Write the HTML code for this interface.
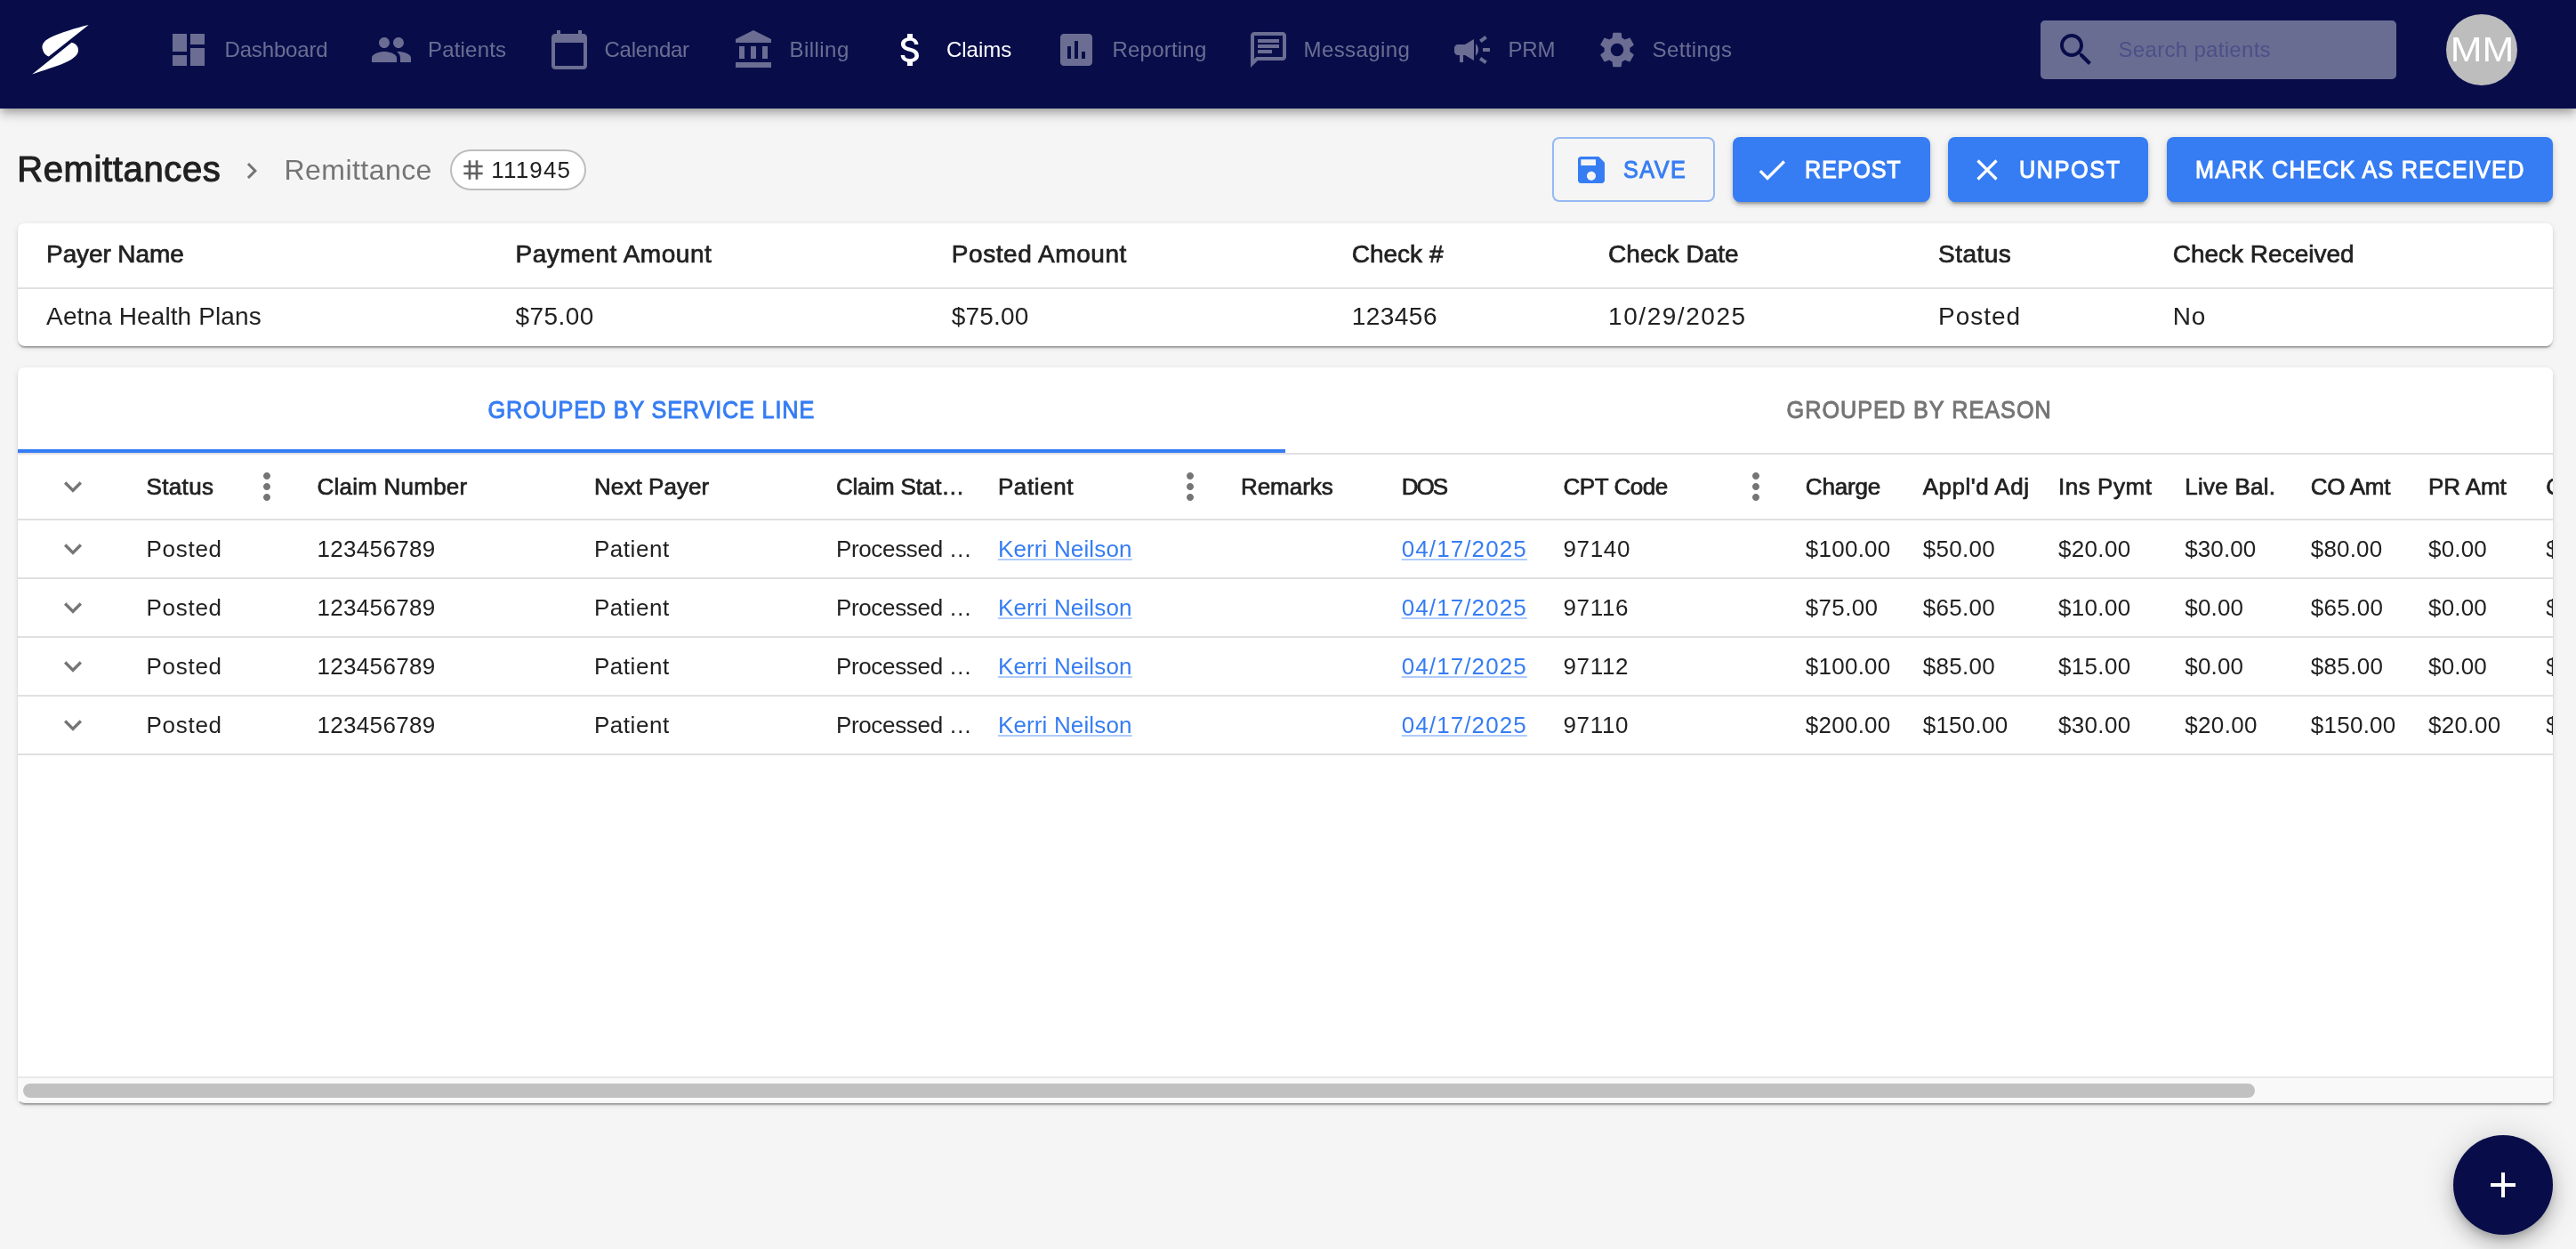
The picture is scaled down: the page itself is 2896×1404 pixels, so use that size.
<!DOCTYPE html>
<html><head><meta charset="utf-8"><style>
html,body{margin:0;padding:0;}
body{width:2896px;height:1404px;overflow:hidden;background:#f5f5f5;position:relative;font-family:"Liberation Sans", sans-serif;}
.t{position:absolute;white-space:nowrap;font-family:"Liberation Sans", sans-serif;}
.r{position:absolute;}
#w{position:absolute;left:0;top:0;width:2896px;height:1404px;will-change:transform;}
@media (max-width:2000px){body{zoom:0.5;}}
</style></head><body><div id="w">
<div class="r" style="left:0px;top:0px;width:2896px;height:122px;background:#080d4a;box-shadow:0 4px 8px -2px rgba(0,0,0,.2),0 8px 10px 0 rgba(0,0,0,.14),0 2px 20px 0 rgba(0,0,0,.12);z-index:2"></div>
<svg class="r" style="left:30px;top:20px;z-index:3" width="80" height="72" viewBox="0 0 80 72"><path fill="#fff" d="M69.7,8.1 C55,11.5 38,17 26,22.5 C19,26 16.5,31 17.8,35 C18.8,39.5 21.5,42.5 24.8,43.4 Z"/><path fill="#fff" d="M6.1,63.6 C20,58.6 33,55 43,50.5 C52,46.5 58,42 58,36.5 C58,32 55,29 50.6,27.8 Z"/></svg>
<svg class="r" style="left:188px;top:32px;z-index:3" width="48" height="48" viewBox="0 0 24 24"><path fill="#6b6e92" d="M3 13h8V3H3v10zm0 8h8v-6H3v6zm10 0h8V11h-8v10zm0-18v6h8V3h-8z"/></svg>
<div class="t" id="t0" style="left:252.5px;top:43.7px;font-size:24px;line-height:24px;color:#6b6e92;letter-spacing:-0.16px;z-index:3">Dashboard</div>
<svg class="r" style="left:415.5px;top:32px;z-index:3" width="48" height="48" viewBox="0 0 24 24"><path fill="#6b6e92" d="M16 11c1.66 0 2.99-1.34 2.99-3S17.66 5 16 5c-1.66 0-3 1.34-3 3s1.34 3 3 3zm-8 0c1.66 0 2.99-1.34 2.99-3S9.66 5 8 5C6.34 5 5 6.34 5 8s1.34 3 3 3zm0 2c-2.33 0-7 1.17-7 3.5V19h14v-2.5c0-2.330-4.67-3.5-7-3.5zm8 0c-.29 0-.62.02-.97.05 1.16.84 1.970 1.97 1.97 3.45V19h6v-2.5c0-2.33-4.67-3.5-7-3.5z"/></svg>
<div class="t" id="t1" style="left:481.0px;top:43.7px;font-size:24px;line-height:24px;color:#6b6e92;letter-spacing:0.19px;z-index:3">Patients</div>
<svg class="r" style="left:616px;top:32px;z-index:3" width="48" height="48" viewBox="0 0 24 24"><path fill="#6b6e92" d="M20 3h-1V1h-2v2H7V1H5v2H4c-1.1 0-2 .9-2 2v16c0 1.1.9 2 2 2h16c1.1 0 2-.9 2-2V5c0-1.1-.9-2-2-2zm0 18H4V8h16v13z"/></svg>
<div class="t" id="t2" style="left:679.5px;top:43.7px;font-size:24px;line-height:24px;color:#6b6e92;letter-spacing:-0.26px;z-index:3">Calendar</div>
<svg class="r" style="left:823px;top:32px;z-index:3" width="48" height="48" viewBox="0 0 24 24"><path fill="#6b6e92" d="M4 10h3v7H4zM10.5 10h3v7h-3zM2 19h20v3H2zM17 10h3v7h-3zM12 1 2 6v2h20V6z"/></svg>
<div class="t" id="t3" style="left:887.5px;top:43.7px;font-size:24px;line-height:24px;color:#6b6e92;letter-spacing:0.45px;z-index:3">Billing</div>
<svg class="r" style="left:999.5px;top:32px;z-index:3" width="48" height="48" viewBox="0 0 24 24"><path fill="#ffffff" d="M11.8 10.9c-2.27-.59-3-1.2-3-2.150 0-1.09 1.01-1.85 2.7-1.85 1.78 0 2.44.85 2.5 2.1h2.21c-.07-1.72-1.12-3.3-3.21-3.81V3h-3v2.16c-1.94.42-3.5 1.68-3.5 3.61 0 2.31 1.91 3.46 4.7 4.13 2.5.6 3 1.48 3 2.41 0 .69-.49 1.79-2.7 1.79-2.06 0-2.87-.92-2.98-2.1h-2.2c.12 2.19 1.76 3.42 3.68 3.83V21h3v-2.15c1.95-.37 3.5-1.5 3.5-3.55 0-2.84-2.43-3.81-4.7-4.4z"/></svg>
<div class="t" id="t4" style="left:1064.0px;top:43.7px;font-size:24px;line-height:24px;color:#ffffff;letter-spacing:-0.02px;z-index:3">Claims</div>
<svg class="r" style="left:1186px;top:32px;z-index:3" width="48" height="48" viewBox="0 0 24 24"><path fill="#6b6e92" d="M19 3H5c-1.1 0-2 .9-2 2v14c0 1.1.9 2 2 2h14c1.1 0 2-.9 2-2V5c0-1.1-.9-2-2-2zM9 17H7v-7h2v7zm4 0h-2V7h2v10zm4 0h-2v-4h2v4z"/></svg>
<div class="t" id="t5" style="left:1250.5px;top:43.7px;font-size:24px;line-height:24px;color:#6b6e92;letter-spacing:0.21px;z-index:3">Reporting</div>
<svg class="r" style="left:1402px;top:32px;z-index:3" width="48" height="48" viewBox="0 0 24 24"><path fill="#6b6e92" d="M20 2H4c-1.1 0-1.99.9-1.99 2L2 22l4-4h14c1.1 0 2-.9 2-2V4c0-1.1-.9-2-2-2zm0 14H5.17L4 17.17V4h16v12zM6 12h8v2H6zm0-3h12v2H6zm0-3h12v2H6z"/></svg>
<div class="t" id="t6" style="left:1465.5px;top:43.7px;font-size:24px;line-height:24px;color:#6b6e92;letter-spacing:0.40px;z-index:3">Messaging</div>
<svg class="r" style="left:1631px;top:32px;z-index:3" width="48" height="48" viewBox="0 0 24 24"><path fill="#6b6e92" d="M18 11v2h4v-2h-4zm-2 6.61c.96.71 2.21 1.65 3.2 2.39.4-.53.8-1.07 1.2-1.6-.99-.74-2.24-1.68-3.2-2.4-.4.54-.8 1.08-1.2 1.61zM20.4 5.6c-.4-.53-.8-1.07-1.2-1.6-.99.74-2.24 1.68-3.2 2.4.4.53.8 1.07 1.2 1.6.96-.72 2.21-1.65 3.2-2.4zM4 9c-1.1 0-2 .9-2 2v2c0 1.1.9 2 2 2h1v4h2v-4h1l5 3V6L8 9H4zm11.5 3c0-1.33-.58-2.53-1.5-3.35v6.69c.92-.81 1.5-2.01 1.5-3.34z"/></svg>
<div class="t" id="t7" style="left:1695.5px;top:43.7px;font-size:24px;line-height:24px;color:#6b6e92;letter-spacing:-0.18px;z-index:3">PRM</div>
<svg class="r" style="left:1794px;top:32px;z-index:3" width="48" height="48" viewBox="0 0 24 24"><path fill="#6b6e92" d="M19.14 12.94c.04-.3.06-.61.06-.94 0-.32-.02-.64-.07-.94l2.03-1.58c.18-.14.23-.41.12-.61l-1.92-3.32c-.12-.22-.37-.29-.59-.22l-2.39.96c-.5-.38-1.03-.7-1.62-.94l-.36-2.54c-.04-.24-.24-.41-.48-.41h-3.84c-.24 0-.43.17-.47.41l-.36 2.54c-.59.24-1.13.57-1.62.94l-2.39-.96c-.22-.08-.47 0-.59.22L2.740 8.87c-.12.21-.08.47.12.61l2.03 1.58c-.05.3-.09.63-.09.94s.02.64.07.94l-2.03 1.58c-.18.14-.23.41-.12.61l1.92 3.32c.12.22.37.29.59.22l2.39-.96c.5.38 1.03.7 1.62.94l.36 2.54c.05.24.24.41.48.41h3.84c.24 0 .44-.17.47-.41l.36-2.54c.59-.24 1.13-.56 1.62-.94l2.39.96c.22.08.47 0 .59-.22l1.92-3.32c.12-.22.07-.47-.12-.61l-2.01-1.58zM12 15.6c-1.98 0-3.6-1.62-3.6-3.6s1.62-3.6 3.6-3.6 3.6 1.62 3.6 3.6-1.62 3.6-3.6 3.6z"/></svg>
<div class="t" id="t8" style="left:1857.5px;top:43.7px;font-size:24px;line-height:24px;color:#6b6e92;letter-spacing:0.39px;z-index:3">Settings</div>
<div class="r" style="left:2294px;top:23px;width:400px;height:66px;background:rgba(255,255,255,.4);border-radius:5px;z-index:3"></div>
<svg class="r" style="left:2310px;top:32px;z-index:3" width="48" height="48" viewBox="0 0 24 24"><path fill="#080d4a" d="M15.5 14h-.79l-.28-.27C15.41 12.59 16 11.11 16 9.5 16 5.91 13.09 3 9.5 3S3 5.91 3 9.5 5.91 16 9.5 16c1.61 0 3.09-.59 4.23-1.57l.27.28v.79l5 4.99L20.49 19l-4.99-5zm-6 0C7.01 14 5 11.99 5 9.5S7.01 5 9.5 5 14 7.01 14 9.5 11.99 14 9.5 14z"/></svg>
<div class="t" id="t9" style="left:2381.5px;top:43.7px;font-size:24px;line-height:24px;color:#4a5087;letter-spacing:0.31px;z-index:3">Search patients</div>
<div class="r" style="left:2750px;top:16px;width:80px;height:80px;background:#bdbdbd;border-radius:50%;z-index:3"></div>
<div class="t" id="t10" style="left:2750.0px;top:36.0px;font-size:39px;line-height:39px;color:#fff;width:80px;text-align:center;z-index:3"><span style="display:inline-block;transform:scaleX(1.1);transform-origin:50% 0">MM</span></div>
<div class="t" id="t11" style="left:19.2px;top:170.1px;font-size:40px;line-height:40px;color:#212121;letter-spacing:0.63px;-webkit-text-stroke:1.1px currentColor;">Remittances</div>
<svg class="r" style="left:264.8px;top:174px;" width="36" height="36" viewBox="0 0 24 24"><path fill="#757575" d="M10 6 8.59 7.41 13.17 12l-4.58 4.59L10 18l6-6z"/></svg>
<div class="t" id="t12" style="left:319.5px;top:174.9px;font-size:32px;line-height:32px;color:#757575;letter-spacing:0.45px;">Remittance</div>
<div class="r" style="left:506px;top:168px;width:153px;height:46px;background:#fff;border:2px solid #bdbdbd;border-radius:23px;box-sizing:border-box"></div>
<svg class="r" style="left:515.7px;top:174.6px;" width="32" height="32" viewBox="0 0 24 24"><path fill="#616161" d="M20 10V8h-4V4h-2v4h-4V4H8v4H4v2h4v4H4v2h4v4h2v-4h4v4h2v-4h4v-2h-4v-4h4zm-6 4h-4v-4h4v4z"/></svg>
<div class="t" id="t13" style="left:552.3px;top:178.0px;font-size:26px;line-height:26px;color:#212121;letter-spacing:1.15px;">111945</div>
<div class="r" style="left:1745px;top:154px;width:183px;height:73px;border:2px solid rgba(54,125,244,.5);border-radius:8px;box-sizing:border-box"></div>
<svg class="r" style="left:1769px;top:171px;" width="40" height="40" viewBox="0 0 24 24"><path fill="#367df4" d="M17 3H5c-1.11 0-2 .9-2 2v14c0 1.1.89 2 2 2h14c1.1 0 2-.9 2-2V7l-4-4zm-5 16c-1.66 0-3-1.34-3-3s1.34-3 3-3 3 1.34 3 3-1.34 3-3 3zm3-10H5V5h10v4z"/></svg>
<div class="t" id="t14" style="left:1825.3px;top:177.1px;font-size:28px;line-height:28px;color:#367df4;letter-spacing:1.67px;-webkit-text-stroke:1.0px currentColor;"><span style="display:inline-block;transform:scaleX(0.9);transform-origin:0 0">SAVE</span></div>
<div class="r" style="left:1948px;top:154px;width:222px;height:73px;background:#367df4;border-radius:8px;box-shadow:0 6px 2px -4px rgba(0,0,0,.2),0 4px 4px 0 rgba(0,0,0,.14),0 2px 10px 0 rgba(0,0,0,.12)"></div>
<div class="r" style="left:2190px;top:154px;width:225px;height:73px;background:#367df4;border-radius:8px;box-shadow:0 6px 2px -4px rgba(0,0,0,.2),0 4px 4px 0 rgba(0,0,0,.14),0 2px 10px 0 rgba(0,0,0,.12)"></div>
<div class="r" style="left:2436px;top:154px;width:434px;height:73px;background:#367df4;border-radius:8px;box-shadow:0 6px 2px -4px rgba(0,0,0,.2),0 4px 4px 0 rgba(0,0,0,.14),0 2px 10px 0 rgba(0,0,0,.12)"></div>
<svg class="r" style="left:1972.3px;top:170.7px;" width="40" height="40" viewBox="0 0 24 24"><path fill="#fff" d="M9 16.17 4.83 12l-1.42 1.41L9 19 21 7l-1.41-1.41z"/></svg>
<div class="t" id="t15" style="left:2028.5px;top:177.1px;font-size:28px;line-height:28px;color:#fff;letter-spacing:0.90px;-webkit-text-stroke:1.0px currentColor;"><span style="display:inline-block;transform:scaleX(0.9);transform-origin:0 0">REPOST</span></div>
<svg class="r" style="left:2213.7px;top:171px;" width="40" height="40" viewBox="0 0 24 24"><path fill="#fff" d="M19 6.41 17.59 5 12 10.59 6.41 5 5 6.41 10.59 12 5 17.59 6.41 19 12 13.41 17.59 19 19 17.59 13.41 12z"/></svg>
<div class="t" id="t16" style="left:2269.5px;top:177.1px;font-size:28px;line-height:28px;color:#fff;letter-spacing:1.80px;-webkit-text-stroke:1.0px currentColor;"><span style="display:inline-block;transform:scaleX(0.9);transform-origin:0 0">UNPOST</span></div>
<div class="t" id="t17" style="left:2468.3px;top:177.1px;font-size:28px;line-height:28px;color:#fff;letter-spacing:1.39px;-webkit-text-stroke:1.0px currentColor;"><span style="display:inline-block;transform:scaleX(0.9);transform-origin:0 0">MARK CHECK AS RECEIVED</span></div>
<div class="r" style="left:20px;top:251px;width:2850px;height:138px;background:#fff;border-radius:8px;box-shadow:0 4px 2px -2px rgba(0,0,0,.2),0 2px 2px 0 rgba(0,0,0,.14),0 2px 6px 0 rgba(0,0,0,.12)"></div>
<div class="r" style="left:20px;top:323px;width:2850px;height:2px;background:#e0e0e0"></div>
<div class="t" id="t18" style="left:52.1px;top:272.3px;font-size:28px;line-height:28px;color:#212121;letter-spacing:-0.11px;-webkit-text-stroke:0.7px currentColor;">Payer Name</div>
<div class="t" id="t19" style="left:52.1px;top:342.0px;font-size:28px;line-height:28px;color:#212121;letter-spacing:0.11px;">Aetna Health Plans</div>
<div class="t" id="t20" style="left:579.5px;top:272.3px;font-size:28px;line-height:28px;color:#212121;letter-spacing:0.55px;-webkit-text-stroke:0.7px currentColor;">Payment Amount</div>
<div class="t" id="t21" style="left:579.5px;top:342.0px;font-size:28px;line-height:28px;color:#212121;letter-spacing:0.45px;">$75.00</div>
<div class="t" id="t22" style="left:1069.8px;top:272.3px;font-size:28px;line-height:28px;color:#212121;letter-spacing:0.55px;-webkit-text-stroke:0.7px currentColor;">Posted Amount</div>
<div class="t" id="t23" style="left:1069.8px;top:342.0px;font-size:28px;line-height:28px;color:#212121;letter-spacing:0.18px;">$75.00</div>
<div class="t" id="t24" style="left:1519.7px;top:272.3px;font-size:28px;line-height:28px;color:#212121;letter-spacing:0.01px;-webkit-text-stroke:0.7px currentColor;">Check #</div>
<div class="t" id="t25" style="left:1519.7px;top:342.0px;font-size:28px;line-height:28px;color:#212121;letter-spacing:0.47px;">123456</div>
<div class="t" id="t26" style="left:1808.1px;top:272.3px;font-size:28px;line-height:28px;color:#212121;letter-spacing:0.03px;-webkit-text-stroke:0.7px currentColor;">Check Date</div>
<div class="t" id="t27" style="left:1808.1px;top:342.0px;font-size:28px;line-height:28px;color:#212121;letter-spacing:1.54px;">10/29/2025</div>
<div class="t" id="t28" style="left:2179.0px;top:272.3px;font-size:28px;line-height:28px;color:#212121;letter-spacing:0.47px;-webkit-text-stroke:0.7px currentColor;">Status</div>
<div class="t" id="t29" style="left:2179.0px;top:342.0px;font-size:28px;line-height:28px;color:#212121;letter-spacing:0.97px;">Posted</div>
<div class="t" id="t30" style="left:2442.7px;top:272.3px;font-size:28px;line-height:28px;color:#212121;-webkit-text-stroke:0.7px currentColor;">Check Received</div>
<div class="t" id="t31" style="left:2442.7px;top:342.0px;font-size:28px;line-height:28px;color:#212121;letter-spacing:0.90px;">No</div>
<div class="r" style="left:20px;top:413px;width:2850px;height:827px;background:#f5f5f5;border-radius:8px;box-shadow:0 4px 2px -2px rgba(0,0,0,.2),0 2px 2px 0 rgba(0,0,0,.14),0 2px 6px 0 rgba(0,0,0,.12)"></div>
<div class="r" style="left:20px;top:413px;width:2850px;height:827px;overflow:hidden;border-radius:8px 8px 0 0"><div style="position:absolute;left:-20px;top:-413px;width:2896px;height:1404px">
<div class="r" style="left:20px;top:413px;width:2850px;height:797px;background:#fff"></div>
<div class="t" id="t32" style="left:20.0px;top:447.3px;font-size:28px;line-height:28px;color:#367df4;letter-spacing:0.96px;-webkit-text-stroke:1.0px currentColor;width:1425px;text-align:center;"><span style="display:inline-block;transform:scaleX(0.9);transform-origin:50% 0">GROUPED BY SERVICE LINE</span></div>
<div class="t" id="t33" style="left:1445.0px;top:447.3px;font-size:28px;line-height:28px;color:#757575;letter-spacing:1.12px;-webkit-text-stroke:1.0px currentColor;width:1425px;text-align:center;"><span style="display:inline-block;transform:scaleX(0.9);transform-origin:50% 0">GROUPED BY REASON</span></div>
<div class="r" style="left:20px;top:505px;width:1425px;height:4px;background:#367df4"></div>
<div class="r" style="left:20px;top:509px;width:2850px;height:2px;background:#e0e0e0"></div>
<div class="r" style="left:20px;top:583px;width:2850px;height:2px;background:#e0e0e0"></div>
<div class="r" style="left:20px;top:649px;width:2850px;height:2px;background:#e0e0e0"></div>
<div class="r" style="left:20px;top:715px;width:2850px;height:2px;background:#e0e0e0"></div>
<div class="r" style="left:20px;top:781px;width:2850px;height:2px;background:#e0e0e0"></div>
<div class="r" style="left:20px;top:847px;width:2850px;height:2px;background:#e0e0e0"></div>
<svg class="r" style="left:61.8px;top:527.4px;" width="40" height="40" viewBox="0 0 24 24"><path fill="#757575" d="M16.59 8.59 12 13.17 7.41 8.59 6 10l6 6 6-6z"/></svg>
<div class="t" id="t34" style="left:164.5px;top:534.0px;font-size:26px;line-height:26px;color:#212121;letter-spacing:0.36px;-webkit-text-stroke:0.7px currentColor;">Status</div>
<div class="t" id="t35" style="left:356.5px;top:534.0px;font-size:26px;line-height:26px;color:#212121;letter-spacing:0.23px;-webkit-text-stroke:0.7px currentColor;">Claim Number</div>
<div class="t" id="t36" style="left:668.0px;top:534.0px;font-size:26px;line-height:26px;color:#212121;letter-spacing:0.07px;-webkit-text-stroke:0.7px currentColor;">Next Payer</div>
<div class="t" id="t37" style="left:939.9px;top:534.0px;font-size:26px;line-height:26px;color:#212121;letter-spacing:-0.16px;-webkit-text-stroke:0.7px currentColor;">Claim Stat…</div>
<div class="t" id="t38" style="left:1121.9px;top:534.0px;font-size:26px;line-height:26px;color:#212121;letter-spacing:0.61px;-webkit-text-stroke:0.7px currentColor;">Patient</div>
<div class="t" id="t39" style="left:1394.9px;top:534.0px;font-size:26px;line-height:26px;color:#212121;letter-spacing:-0.03px;-webkit-text-stroke:0.7px currentColor;">Remarks</div>
<div class="t" id="t40" style="left:1575.7px;top:534.0px;font-size:26px;line-height:26px;color:#212121;letter-spacing:-2.02px;-webkit-text-stroke:0.7px currentColor;">DOS</div>
<div class="t" id="t41" style="left:1757.5px;top:534.0px;font-size:26px;line-height:26px;color:#212121;letter-spacing:-0.46px;-webkit-text-stroke:0.7px currentColor;">CPT Code</div>
<div class="t" id="t42" style="left:2029.8px;top:534.0px;font-size:26px;line-height:26px;color:#212121;letter-spacing:-0.16px;-webkit-text-stroke:0.7px currentColor;">Charge</div>
<div class="t" id="t43" style="left:2161.7px;top:534.0px;font-size:26px;line-height:26px;color:#212121;letter-spacing:0.49px;-webkit-text-stroke:0.7px currentColor;">Appl'd Adj</div>
<div class="t" id="t44" style="left:2314.0px;top:534.0px;font-size:26px;line-height:26px;color:#212121;letter-spacing:0.54px;-webkit-text-stroke:0.7px currentColor;">Ins Pymt</div>
<div class="t" id="t45" style="left:2456.3px;top:534.0px;font-size:26px;line-height:26px;color:#212121;letter-spacing:0.25px;-webkit-text-stroke:0.7px currentColor;">Live Bal.</div>
<div class="t" id="t46" style="left:2597.8px;top:534.0px;font-size:26px;line-height:26px;color:#212121;letter-spacing:-0.27px;-webkit-text-stroke:0.7px currentColor;">CO Amt</div>
<div class="t" id="t47" style="left:2730.0px;top:534.0px;font-size:26px;line-height:26px;color:#212121;letter-spacing:-0.07px;-webkit-text-stroke:0.7px currentColor;">PR Amt</div>
<div class="t" id="t48" style="left:2862.3px;top:534.0px;font-size:26px;line-height:26px;color:#212121;-webkit-text-stroke:0.7px currentColor;">Cap</div>
<svg class="r" style="left:276px;top:523px;" width="48" height="48" viewBox="0 0 24 24"><path fill="#757575" d="M12 8c1.1 0 2-.9 2-2s-.9-2-2-2-2 .9-2 2 .9 2 2 2zm0 2c-1.1 0-2 .9-2 2s.9 2 2 2 2-.9 2-2-.9-2-2-2zm0 6c-1.1 0-2 .9-2 2s.9 2 2 2 2-.9 2-2-.9-2-2-2z"/></svg>
<svg class="r" style="left:1314px;top:523px;" width="48" height="48" viewBox="0 0 24 24"><path fill="#757575" d="M12 8c1.1 0 2-.9 2-2s-.9-2-2-2-2 .9-2 2 .9 2 2 2zm0 2c-1.1 0-2 .9-2 2s.9 2 2 2 2-.9 2-2-.9-2-2-2zm0 6c-1.1 0-2 .9-2 2s.9 2 2 2 2-.9 2-2-.9-2-2-2z"/></svg>
<svg class="r" style="left:1950px;top:523px;" width="48" height="48" viewBox="0 0 24 24"><path fill="#757575" d="M12 8c1.1 0 2-.9 2-2s-.9-2-2-2-2 .9-2 2 .9 2 2 2zm0 2c-1.1 0-2 .9-2 2s.9 2 2 2 2-.9 2-2-.9-2-2-2zm0 6c-1.1 0-2 .9-2 2s.9 2 2 2 2-.9 2-2-.9-2-2-2z"/></svg>
<svg class="r" style="left:61.8px;top:597.3px;" width="40" height="40" viewBox="0 0 24 24"><path fill="#757575" d="M16.59 8.59 12 13.17 7.41 8.59 6 10l6 6 6-6z"/></svg>
<div class="t" id="t49" style="left:164.5px;top:603.7px;font-size:26px;line-height:26px;color:#212121;letter-spacing:0.72px;">Posted</div>
<div class="t" id="t50" style="left:356.5px;top:603.7px;font-size:26px;line-height:26px;color:#212121;letter-spacing:0.32px;">123456789</div>
<div class="t" id="t51" style="left:668.0px;top:603.7px;font-size:26px;line-height:26px;color:#212121;letter-spacing:0.53px;">Patient</div>
<div class="t" id="t52" style="left:939.9px;top:603.7px;font-size:26px;line-height:26px;color:#212121;letter-spacing:-0.33px;">Processed …</div>
<div class="t" id="t53" style="left:1121.9px;top:603.7px;font-size:26px;line-height:26px;color:#367df4;letter-spacing:0.15px;text-decoration:underline;text-decoration-color:rgba(54,125,244,.4);text-underline-offset:2px;text-decoration-thickness:2px;">Kerri Neilson</div>
<div class="t" id="t54" style="left:1575.7px;top:603.7px;font-size:26px;line-height:26px;color:#367df4;letter-spacing:1.10px;text-decoration:underline;text-decoration-color:rgba(54,125,244,.4);text-underline-offset:2px;text-decoration-thickness:2px;">04/17/2025</div>
<div class="t" id="t55" style="left:1757.5px;top:603.7px;font-size:26px;line-height:26px;color:#212121;letter-spacing:0.65px;">97140</div>
<div class="t" id="t56" style="left:2029.8px;top:603.7px;font-size:26px;line-height:26px;color:#212121;letter-spacing:0.25px;">$100.00</div>
<div class="t" id="t57" style="left:2161.7px;top:603.7px;font-size:26px;line-height:26px;color:#212121;letter-spacing:0.32px;">$50.00</div>
<div class="t" id="t58" style="left:2314.0px;top:603.7px;font-size:26px;line-height:26px;color:#212121;letter-spacing:0.32px;">$20.00</div>
<div class="t" id="t59" style="left:2456.3px;top:603.7px;font-size:26px;line-height:26px;color:#212121;letter-spacing:0.07px;">$30.00</div>
<div class="t" id="t60" style="left:2597.8px;top:603.7px;font-size:26px;line-height:26px;color:#212121;letter-spacing:0.18px;">$80.00</div>
<div class="t" id="t61" style="left:2730.0px;top:603.7px;font-size:26px;line-height:26px;color:#212121;letter-spacing:0.18px;">$0.00</div>
<div class="t" id="t62" style="left:2862.3px;top:603.7px;font-size:26px;line-height:26px;color:#212121;">$0</div>
<svg class="r" style="left:61.8px;top:663.3px;" width="40" height="40" viewBox="0 0 24 24"><path fill="#757575" d="M16.59 8.59 12 13.17 7.41 8.59 6 10l6 6 6-6z"/></svg>
<div class="t" id="t63" style="left:164.5px;top:669.7px;font-size:26px;line-height:26px;color:#212121;letter-spacing:0.72px;">Posted</div>
<div class="t" id="t64" style="left:356.5px;top:669.7px;font-size:26px;line-height:26px;color:#212121;letter-spacing:0.32px;">123456789</div>
<div class="t" id="t65" style="left:668.0px;top:669.7px;font-size:26px;line-height:26px;color:#212121;letter-spacing:0.53px;">Patient</div>
<div class="t" id="t66" style="left:939.9px;top:669.7px;font-size:26px;line-height:26px;color:#212121;letter-spacing:-0.33px;">Processed …</div>
<div class="t" id="t67" style="left:1121.9px;top:669.7px;font-size:26px;line-height:26px;color:#367df4;letter-spacing:0.15px;text-decoration:underline;text-decoration-color:rgba(54,125,244,.4);text-underline-offset:2px;text-decoration-thickness:2px;">Kerri Neilson</div>
<div class="t" id="t68" style="left:1575.7px;top:669.7px;font-size:26px;line-height:26px;color:#367df4;letter-spacing:1.10px;text-decoration:underline;text-decoration-color:rgba(54,125,244,.4);text-underline-offset:2px;text-decoration-thickness:2px;">04/17/2025</div>
<div class="t" id="t69" style="left:1757.5px;top:669.7px;font-size:26px;line-height:26px;color:#212121;letter-spacing:0.65px;">97116</div>
<div class="t" id="t70" style="left:2029.8px;top:669.7px;font-size:26px;line-height:26px;color:#212121;letter-spacing:0.32px;">$75.00</div>
<div class="t" id="t71" style="left:2161.7px;top:669.7px;font-size:26px;line-height:26px;color:#212121;letter-spacing:0.32px;">$65.00</div>
<div class="t" id="t72" style="left:2314.0px;top:669.7px;font-size:26px;line-height:26px;color:#212121;letter-spacing:0.32px;">$10.00</div>
<div class="t" id="t73" style="left:2456.3px;top:669.7px;font-size:26px;line-height:26px;color:#212121;letter-spacing:0.18px;">$0.00</div>
<div class="t" id="t74" style="left:2597.8px;top:669.7px;font-size:26px;line-height:26px;color:#212121;letter-spacing:0.32px;">$65.00</div>
<div class="t" id="t75" style="left:2730.0px;top:669.7px;font-size:26px;line-height:26px;color:#212121;letter-spacing:0.18px;">$0.00</div>
<div class="t" id="t76" style="left:2862.3px;top:669.7px;font-size:26px;line-height:26px;color:#212121;">$0</div>
<svg class="r" style="left:61.8px;top:729.3px;" width="40" height="40" viewBox="0 0 24 24"><path fill="#757575" d="M16.59 8.59 12 13.17 7.41 8.59 6 10l6 6 6-6z"/></svg>
<div class="t" id="t77" style="left:164.5px;top:735.7px;font-size:26px;line-height:26px;color:#212121;letter-spacing:0.72px;">Posted</div>
<div class="t" id="t78" style="left:356.5px;top:735.7px;font-size:26px;line-height:26px;color:#212121;letter-spacing:0.32px;">123456789</div>
<div class="t" id="t79" style="left:668.0px;top:735.7px;font-size:26px;line-height:26px;color:#212121;letter-spacing:0.53px;">Patient</div>
<div class="t" id="t80" style="left:939.9px;top:735.7px;font-size:26px;line-height:26px;color:#212121;letter-spacing:-0.33px;">Processed …</div>
<div class="t" id="t81" style="left:1121.9px;top:735.7px;font-size:26px;line-height:26px;color:#367df4;letter-spacing:0.15px;text-decoration:underline;text-decoration-color:rgba(54,125,244,.4);text-underline-offset:2px;text-decoration-thickness:2px;">Kerri Neilson</div>
<div class="t" id="t82" style="left:1575.7px;top:735.7px;font-size:26px;line-height:26px;color:#367df4;letter-spacing:1.10px;text-decoration:underline;text-decoration-color:rgba(54,125,244,.4);text-underline-offset:2px;text-decoration-thickness:2px;">04/17/2025</div>
<div class="t" id="t83" style="left:1757.5px;top:735.7px;font-size:26px;line-height:26px;color:#212121;letter-spacing:0.65px;">97112</div>
<div class="t" id="t84" style="left:2029.8px;top:735.7px;font-size:26px;line-height:26px;color:#212121;letter-spacing:0.25px;">$100.00</div>
<div class="t" id="t85" style="left:2161.7px;top:735.7px;font-size:26px;line-height:26px;color:#212121;letter-spacing:0.32px;">$85.00</div>
<div class="t" id="t86" style="left:2314.0px;top:735.7px;font-size:26px;line-height:26px;color:#212121;letter-spacing:0.32px;">$15.00</div>
<div class="t" id="t87" style="left:2456.3px;top:735.7px;font-size:26px;line-height:26px;color:#212121;letter-spacing:0.18px;">$0.00</div>
<div class="t" id="t88" style="left:2597.8px;top:735.7px;font-size:26px;line-height:26px;color:#212121;letter-spacing:0.32px;">$85.00</div>
<div class="t" id="t89" style="left:2730.0px;top:735.7px;font-size:26px;line-height:26px;color:#212121;letter-spacing:0.18px;">$0.00</div>
<div class="t" id="t90" style="left:2862.3px;top:735.7px;font-size:26px;line-height:26px;color:#212121;">$0</div>
<svg class="r" style="left:61.8px;top:795.3px;" width="40" height="40" viewBox="0 0 24 24"><path fill="#757575" d="M16.59 8.59 12 13.17 7.41 8.59 6 10l6 6 6-6z"/></svg>
<div class="t" id="t91" style="left:164.5px;top:801.7px;font-size:26px;line-height:26px;color:#212121;letter-spacing:0.72px;">Posted</div>
<div class="t" id="t92" style="left:356.5px;top:801.7px;font-size:26px;line-height:26px;color:#212121;letter-spacing:0.32px;">123456789</div>
<div class="t" id="t93" style="left:668.0px;top:801.7px;font-size:26px;line-height:26px;color:#212121;letter-spacing:0.53px;">Patient</div>
<div class="t" id="t94" style="left:939.9px;top:801.7px;font-size:26px;line-height:26px;color:#212121;letter-spacing:-0.33px;">Processed …</div>
<div class="t" id="t95" style="left:1121.9px;top:801.7px;font-size:26px;line-height:26px;color:#367df4;letter-spacing:0.15px;text-decoration:underline;text-decoration-color:rgba(54,125,244,.4);text-underline-offset:2px;text-decoration-thickness:2px;">Kerri Neilson</div>
<div class="t" id="t96" style="left:1575.7px;top:801.7px;font-size:26px;line-height:26px;color:#367df4;letter-spacing:1.10px;text-decoration:underline;text-decoration-color:rgba(54,125,244,.4);text-underline-offset:2px;text-decoration-thickness:2px;">04/17/2025</div>
<div class="t" id="t97" style="left:1757.5px;top:801.7px;font-size:26px;line-height:26px;color:#212121;letter-spacing:0.65px;">97110</div>
<div class="t" id="t98" style="left:2029.8px;top:801.7px;font-size:26px;line-height:26px;color:#212121;letter-spacing:0.25px;">$200.00</div>
<div class="t" id="t99" style="left:2161.7px;top:801.7px;font-size:26px;line-height:26px;color:#212121;letter-spacing:0.25px;">$150.00</div>
<div class="t" id="t100" style="left:2314.0px;top:801.7px;font-size:26px;line-height:26px;color:#212121;letter-spacing:0.32px;">$30.00</div>
<div class="t" id="t101" style="left:2456.3px;top:801.7px;font-size:26px;line-height:26px;color:#212121;letter-spacing:0.32px;">$20.00</div>
<div class="t" id="t102" style="left:2597.8px;top:801.7px;font-size:26px;line-height:26px;color:#212121;letter-spacing:0.25px;">$150.00</div>
<div class="t" id="t103" style="left:2730.0px;top:801.7px;font-size:26px;line-height:26px;color:#212121;letter-spacing:0.32px;">$20.00</div>
<div class="t" id="t104" style="left:2862.3px;top:801.7px;font-size:26px;line-height:26px;color:#212121;">$0</div>
<div class="r" style="left:20px;top:1210px;width:2850px;height:28px;background:#f9f9f9;border-top:2px solid #e8e8e8;box-sizing:border-box"></div>
<div class="r" style="left:26px;top:1218px;width:2509px;height:16px;background:#c1c1c1;border-radius:8px"></div>
</div></div>
<div class="r" style="left:2758px;top:1276px;width:112px;height:112px;background:#080d4a;border-radius:50%;box-shadow:0 6px 10px -2px rgba(0,0,0,.2),0 12px 20px 2px rgba(0,0,0,.14),0 2px 36px 4px rgba(0,0,0,.12)"></div>
<div class="r" style="left:2800px;top:1330px;width:28px;height:4px;background:#fff"></div>
<div class="r" style="left:2812px;top:1318px;width:4px;height:28px;background:#fff"></div>
</div></body></html>
